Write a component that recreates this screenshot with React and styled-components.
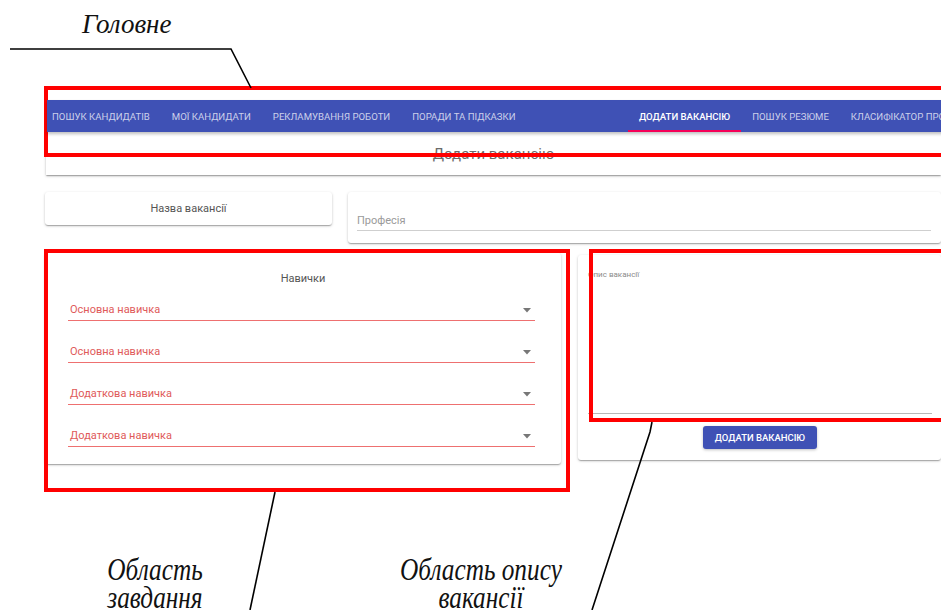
import React from "react";
import styled, { createGlobalStyle } from "styled-components";

const GlobalStyle = createGlobalStyle`
    html, body {
        margin: 0;
        padding: 0;
        background: #ffffff;
    }
    body {
        font-family: Roboto, "Noto Sans", "Liberation Sans", sans-serif;
    }
`;

const leftTabs = ["Пошук кандидатів", "Мої кандидати", "Рекламування роботи", "Поради та підказки"];
const rightTabs = [
    { label: "Додати вакансію", active: true },
    { label: "Пошук резюме" },
    { label: "Класифікатор професій" },
];
const skills = ["Основна навичка", "Основна навичка", "Додаткова навичка", "Додаткова навичка"];

function Arrow() {
    return (
        <svg width="8" height="5" viewBox="0 0 8 5">
            <path d="M0 0 L8 0 L4 4.5 Z" fill="#777" />
        </svg>
    );
}

function App() {
    return (
        <Page>
            <GlobalStyle />
            <TopCaption>
                <Heading>Головне</Heading>
            </TopCaption>

            <Screen>
                <AppBar>
                    <TabGroup $width={582}>
                        {leftTabs.map((t, i) => (
                            <Tab key={t} $lead={i === 0}>
                                {t}
                            </Tab>
                        ))}
                    </TabGroup>
                    <TabGroup>
                        {rightTabs.map((t) => (
                            <Tab key={t.label} $active={t.active}>
                                {t.label}
                            </Tab>
                        ))}
                    </TabGroup>
                </AppBar>

                <TitlePaper>Додати вакансію</TitlePaper>

                <TopRow>
                    <NameCard>Назва вакансії</NameCard>
                    <ProfessionCard>
                        <FieldLabel>Професія</FieldLabel>
                    </ProfessionCard>
                </TopRow>

                <MainRow>
                    <SkillsCard>
                        <CardTitle>Навички</CardTitle>
                        {skills.map((s, i) => (
                            <Select key={i}>
                                <span>{s}</span>
                                <Arrow />
                            </Select>
                        ))}
                    </SkillsCard>
                    <DescriptionCard>
                        <TextArea>
                            <SmallLabel>Опис вакансії</SmallLabel>
                        </TextArea>
                        <SubmitButton>Додати вакансію</SubmitButton>
                    </DescriptionCard>
                </MainRow>
            </Screen>

            <BottomCaptions>
                <Note $center={155}>
                    <NoteLine>Область</NoteLine>
                    <NoteLine>завдання</NoteLine>
                </Note>
                <Note $center={481}>
                    <NoteLine>Область опису</NoteLine>
                    <NoteLine>вакансії</NoteLine>
                </Note>
            </BottomCaptions>

            {/* callout frames and leader lines */}
            <Frame style={{ left: 44, top: 86, width: 960, height: 71 }} />
            <Frame style={{ left: 44, top: 249, width: 526, height: 243 }} />
            <Frame style={{ left: 589, top: 249, width: 400, height: 173 }} />
            <Leaders width="941" height="610" viewBox="0 0 941 610">
                <polyline points="10,49 231,49 251,88" fill="none" stroke="#000" strokeWidth="1.6" />
                <polyline points="275,492 250,610" fill="none" stroke="#000" strokeWidth="1.6" />
                <polyline points="652,422 650,432 592,610" fill="none" stroke="#000" strokeWidth="1.6" />
            </Leaders>
        </Page>
    );
}
export default App;

const Page = styled.div`
    position: relative;
    width: 941px;
    height: 610px;
    overflow: hidden;
    background: #fff;
`;
const TopCaption = styled.div`
    height: 100px;
    padding: 9px 0 0 82px;
    box-sizing: border-box;
`;
const Heading = styled.div`
    font-family: "Liberation Serif", "DejaVu Serif", serif;
    font-style: italic;
    font-size: 27px;
    line-height: 30px;
    color: #111;
`;
const Note = styled.div`
    position: absolute;
    top: 0;
    left: ${(p) => p.$center - 120}px;
    width: 240px;
    font-family: "Liberation Serif", "DejaVu Serif", serif;
    font-style: italic;
    font-size: 32px;
    color: #111;
    text-align: center;
    transform: scaleX(0.79);
`;
const NoteLine = styled.div`
    height: 28px;
    line-height: 28px;
    white-space: nowrap;
`;
const Screen = styled.div`
    margin-left: 46px;
    width: 895px;
`;
const AppBar = styled.div`
    display: flex;
    height: 32px;
    background: #3f51b5;
    width: 960px;
    margin-left: 1px;
    box-shadow: 0 2px 3px rgba(0, 0, 0, 0.25);
    position: relative;
    z-index: 1;
`;
const TabGroup = styled.div`
    display: flex;
    flex: 0 0 ${(p) => (p.$width ? `${p.$width - 1}px` : "auto")};
`;
const Tab = styled.div`
    display: flex;
    align-items: center;
    padding: 0 ${(p) => (p.$lead ? "11px 0 5px" : "11px")};
    font-size: 9.6px;
    font-weight: ${(p) => (p.$active ? 500 : 400)};
    text-transform: uppercase;
    white-space: nowrap;
    color: ${(p) => (p.$active ? "#ffffff" : "rgba(255, 255, 255, 0.74)")};
    box-shadow: ${(p) => (p.$active ? "inset 0 -2px 0 #f50057" : "none")};
`;
const Paper = styled.div`
    background: #fff;
    border-radius: 3px;
    box-shadow: 0 1px 3px rgba(0, 0, 0, 0.2), 0 1px 1px rgba(0, 0, 0, 0.14),
        0 2px 1px -1px rgba(0, 0, 0, 0.12);
`;
const TitlePaper = styled(Paper)`
    height: 43px;
    border-radius: 0;
    display: flex;
    align-items: center;
    justify-content: center;
    font-size: 15px;
    color: #6a6a6a;
`;
const TopRow = styled.div`
    display: flex;
    align-items: flex-start;
    gap: 16px;
    margin-top: 17px;
    margin-left: -1px;
`;
const NameCard = styled(Paper)`
    flex: 0 0 287px;
    height: 33px;
    box-sizing: border-box;
    padding-top: 10px;
    text-align: center;
    font-size: 11px;
    color: #555;
`;
const ProfessionCard = styled(Paper)`
    flex: 1;
    height: 51px;
    box-sizing: border-box;
    padding: 22px 10px 0 9px;
`;
const FieldLabel = styled.div`
    font-size: 11px;
    color: #9a9a9a;
    padding-bottom: 3px;
    border-bottom: 1px solid #cfcfcf;
`;
const MainRow = styled.div`
    display: flex;
    align-items: flex-start;
    gap: 17px;
    margin-top: 10px;
    margin-left: -1px;
`;
const SkillsCard = styled(Paper)`
    flex: 0 0 516px;
    box-sizing: border-box;
    padding: 19px 26px 17px 23px;
`;
const CardTitle = styled.div`
    text-align: center;
    font-size: 11px;
    color: #555;
    margin-bottom: 13px;
    margin-left: 3px;
`;
const Select = styled.div`
    display: flex;
    align-items: center;
    justify-content: space-between;
    height: 22px;
    padding: 0 4px 0 2px;
    margin-bottom: 19px;
    font-size: 11px;
    color: #e05a5a;
    border-bottom: 1px solid #ee7070;
    &:last-child {
        margin-bottom: 0;
    }
    svg {
        margin-top: 3px;
    }
`;
const DescriptionCard = styled(Paper)`
    flex: 1;
    margin-top: 2px;
    box-sizing: border-box;
    padding: 15px 9px 11px 10px;
    display: flex;
    flex-direction: column;
    align-items: center;
`;
const TextArea = styled.div`
    align-self: stretch;
    height: 143px;
    border-bottom: 1px solid #b8b8b8;
`;
const SmallLabel = styled.div`
    font-size: 8px;
    color: #8a8a8a;
`;
const SubmitButton = styled.div`
    margin-top: 12px;
    width: 114px;
    height: 23px;
    display: flex;
    align-items: center;
    justify-content: center;
    border-radius: 3px;
    background: #3f51b5;
    color: #fff;
    font-size: 9.5px;
    font-weight: 500;
    text-transform: uppercase;
    box-shadow: 0 1px 3px rgba(0, 0, 0, 0.25);
`;
const BottomCaptions = styled.div`
    position: relative;
    margin-top: 91px;
    height: 60px;
`;
const Frame = styled.div`
    position: absolute;
    box-sizing: border-box;
    border: 4px solid #ff0000;
    pointer-events: none;
`;
const Leaders = styled.svg`
    position: absolute;
    left: 0;
    top: 0;
    pointer-events: none;
`;
